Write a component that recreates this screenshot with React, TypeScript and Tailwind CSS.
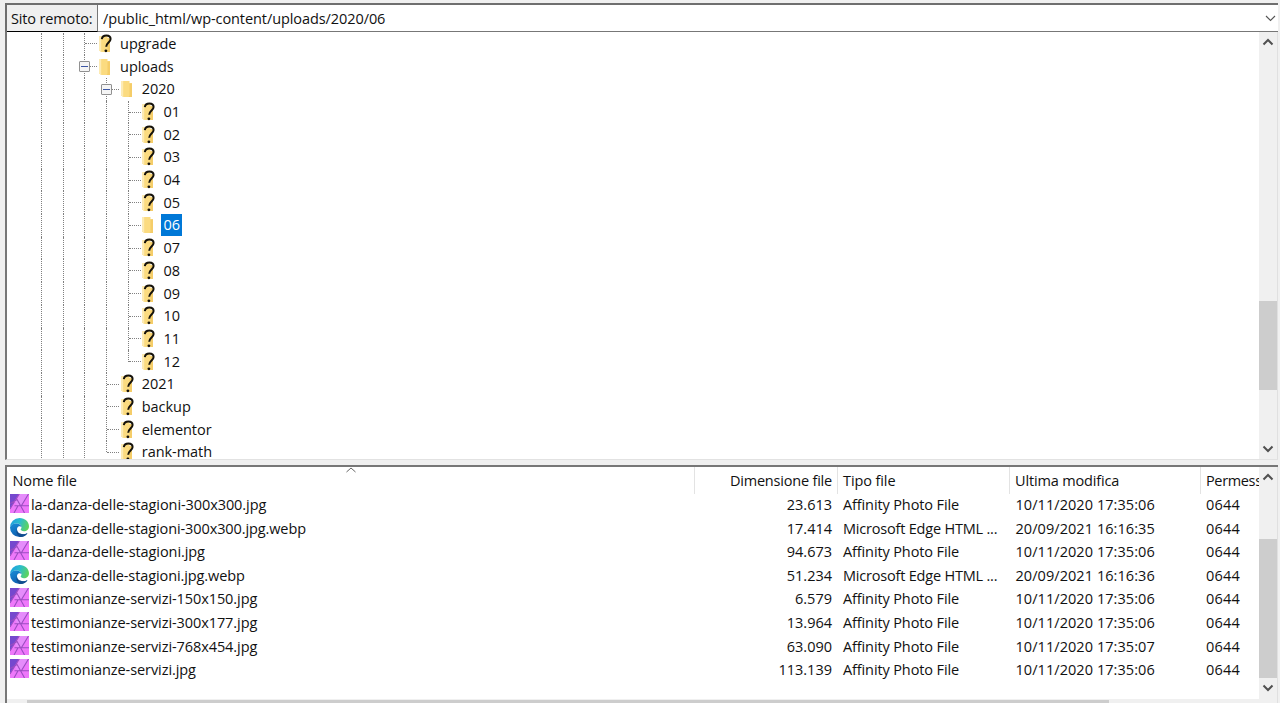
import clsx from 'clsx'

type Guide = 'line' | 'branch' | 'last' | 'box'

interface TreeRow {
  label: string
  guides: Guide[]
  open?: boolean
  selected?: boolean
}

const months = ['01', '02', '03', '04', '05', '06', '07', '08', '09', '10', '11', '12']

const tree: TreeRow[] = [
  { label: 'upgrade', guides: ['line', 'line', 'branch'] },
  { label: 'uploads', guides: ['line', 'line', 'box'], open: true },
  { label: '2020', guides: ['line', 'line', 'line', 'box'], open: true },
  ...months.map((label): TreeRow => ({
    label,
    guides: ['line', 'line', 'line', 'line', label === '12' ? 'last' : 'branch'],
    open: label === '06',
    selected: label === '06',
  })),
  { label: '2021', guides: ['line', 'line', 'line', 'branch'] },
  { label: 'backup', guides: ['line', 'line', 'line', 'branch'] },
  { label: 'elementor', guides: ['line', 'line', 'line', 'branch'] },
  { label: 'rank-math', guides: ['line', 'line', 'line', 'last'] },
]

const files = [
  { name: 'la-danza-delle-stagioni-300x300.jpg', size: '23.613', date: '10/11/2020 17:35:06' },
  { name: 'la-danza-delle-stagioni-300x300.jpg.webp', size: '17.414', date: '20/09/2021 16:16:35' },
  { name: 'la-danza-delle-stagioni.jpg', size: '94.673', date: '10/11/2020 17:35:06' },
  { name: 'la-danza-delle-stagioni.jpg.webp', size: '51.234', date: '20/09/2021 16:16:36' },
  { name: 'testimonianze-servizi-150x150.jpg', size: '6.579', date: '10/11/2020 17:35:06' },
  { name: 'testimonianze-servizi-300x177.jpg', size: '13.964', date: '10/11/2020 17:35:06' },
  { name: 'testimonianze-servizi-768x454.jpg', size: '63.090', date: '10/11/2020 17:35:07' },
  { name: 'testimonianze-servizi.jpg', size: '113.139', date: '10/11/2020 17:35:06' },
]

const columns = 'grid grid-cols-[688px_143px_172px_191px_58px]'

function FolderIcon({ open }: { open?: boolean }) {
  return (
    <svg width="14" height="20" viewBox="0 0 14 20" className="shrink-0">
      <path d="M1 2h8.5v2.2H12V18H3.5L1 16.5z" fill="#fbdb80" />
      <path d="M1 2h2.2v16L1 16.5z" fill="#fdebb4" />
      <path d="M9.5 4.2H12V18H8.5l1-1.5z" fill="#f5cd69" />
      {!open && (
        <>
          <path
            d="M3.8 5.2C4.2 2.6 6 1.600 8.400 1.600c2.600 0 4.200 1.400 4.200 3.500 0 3.300-4.400 3.800-4.400 7.700"
            fill="none"
            stroke="#15120b"
            strokeWidth="2"
          />
          <circle cx="7.9" cy="16.8" r="1.4" fill="#15120b" />
        </>
      )}
    </svg>
  )
}

function PhotoIcon() {
  return (
    <svg width="19" height="19" viewBox="0 0 19 19">
      <path d="M0 0h19v19H0z" fill="#ee78fa" />
      <path d="M9 0h10L12 11H7L5 7z" fill="#e58cfb" />
      <path d="M0 0h9L0 14.5z" fill="#7548ce" />
      <path
        d="M9.3 0 0 15M6.500 4.500 13.500 17M18.500 0l-7 11.500M0 9.500 6.500 6M4.500 11.800H19M8 11.800 4 19M13.500 17l1 2"
        fill="none"
        stroke="#9b4cc1"
        strokeWidth="1.1"
      />
    </svg>
  )
}

function EdgeIcon() {
  return (
    <svg width="19" height="19" viewBox="0 0 19 19">
      <defs>
        <linearGradient id="edge-top" x1="0" y1="0.2" x2="1" y2="0.5">
          <stop offset="0" stopColor="#1e9de0" />
          <stop offset="0.5" stopColor="#2bbdcb" />
          <stop offset="1" stopColor="#5ed45c" />
        </linearGradient>
        <linearGradient id="edge-body" x1="0" y1="0" x2="0.6" y2="1">
          <stop offset="0" stopColor="#1a8fd8" />
          <stop offset="1" stopColor="#0c59ab" />
        </linearGradient>
      </defs>
      <path
        d="M0 9.500A9.500 9.500 0 0 1 9.500 0C15.200 0 19 4 19 8.200c0 3.200-2.300 5-5 5-2.200 0-3.300-.8-3.300-1.600 0-.6.800-1 .8-2.300C11.500 7 9 5.600 6.500 5.600 3 5.600.6 7.500 0 9.500z"
        fill="url(#edge-top)"
      />
      <path
        d="M0 9.500C.5 7 3 5.400 6.200 5.400c3 0 5.300 1.700 5.300 3.900-.6-.9-1.500-1.300-2.500-1-1.400.4-2 1.600-2 3.200 0 2.800 2.800 4.700 5.800 4.700 2 0 3.500-.6 4.700-1.300C16.200 17.300 13.500 19 9.500 19A9.500 9.500 0 0 1 0 9.500z"
        fill="url(#edge-body)"
      />
      <path
        d="M7 11.500c0 2.800 2.800 4.700 5.800 4.700 2 0 3.500-.6 4.700-1.300C16 17.500 13.500 19 10.500 19 7.500 18 5.500 14.500 7 11.500z"
        fill="#124d8e"
      />
    </svg>
  )
}

function Arrow({ down, className }: { down?: boolean; className?: string }) {
  return (
    <svg width="12" height="8" viewBox="0 0 12 8" className={className}>
      <path
        d={down ? 'M1.5 1.5 6 6l4.500-4.500' : 'M1.500 6.500 6 2l4.500 4.500'}
        fill="none"
        stroke="currentColor"
        strokeWidth="2"
      />
    </svg>
  )
}

function GuideCell({ kind }: { kind: Guide }) {
  return (
    <div className="w-[21.7px] shrink-0 flex">
      <div
        className={clsx(
          'w-px shrink-0 border-l border-dotted border-[#808080]',
          kind === 'last' ? 'h-1/2' : 'h-full',
        )}
      />
      {kind !== 'line' && (
        <div className="self-center h-px w-[12px] shrink-0 border-t border-dotted border-[#808080]" />
      )}
      {kind === 'box' && (
        <div className="self-center -ml-[18px] z-10 flex items-center justify-center size-[11px] shrink-0 rounded-[1px] border border-[#919191] bg-[#f5f5f5]">
          <div className="w-[7px] h-px bg-[#3d57a5]" />
        </div>
      )}
    </div>
  )
}

function TreeItem({ row }: { row: TreeRow }) {
  return (
    <div className="flex h-[22.7px] pl-[34px] shrink-0">
      {row.guides.map((kind, i) => (
        <GuideCell key={i} kind={kind} />
      ))}
      <div className="flex items-center -ml-[8px]">
        <FolderIcon open={row.open} />
        <span
          className={clsx(
            'ml-[6px] px-[2px] h-[22px] leading-[22px] tracking-[-0.05px]',
            row.selected && 'bg-[#0078d7] text-white',
          )}
        >
          {row.label}
        </span>
      </div>
    </div>
  )
}

export default function App() {
  return (
    <div className="w-[1280px] h-[703px] overflow-hidden bg-[#f0f0f0] pl-[5px] pr-[2px] pt-[3px] flex flex-col text-[14.5px] text-[#111] whitespace-nowrap font-['Open_Sans','Noto_Sans',sans-serif]">
      <div className="h-[29px] shrink-0 flex border-t-2 border-l-2 border-[#6f6f6f]">
        <div className="w-[91px] h-[27px] pl-[4px] leading-[27px] border-r border-b border-r-[#777] border-b-black tracking-[-0.15px]">
          Sito remoto:
        </div>
        <div className="flex-1 bg-white border-b border-[#777] pl-[5px] leading-[27px] tracking-[-0.08px] flex justify-between">
          <span>/public_html/wp-content/uploads/2020/06</span>
          <svg width="11" height="7" viewBox="0 0 11 7" className="mt-[10px] mr-[2px]">
            <path d="m1 1 4.500 4.500L10 1" fill="none" stroke="#555" strokeWidth="1.1" />
          </svg>
        </div>
      </div>

      <div className="h-[428px] shrink-0 flex border-l-2 border-b border-l-[#777] border-b-[#e2e2e2] bg-white">
        <div className="flex-1 overflow-hidden flex flex-col pt-[0.6px]">
          {tree.map((row) => (
            <TreeItem key={row.label} row={row} />
          ))}
        </div>
        <div className="w-[19px] bg-[#f0f0f0] border-r border-[#e0e0e0] flex flex-col items-center text-[#505050]">
          <Arrow className="mt-[6px]" />
          <div className="mt-[255px] w-full h-[89px] bg-[#cdcdcd]" />
          <Arrow down className="mt-auto mb-[6px]" />
        </div>
      </div>

      <div className="mt-[5px] h-[238px] shrink-0 flex border-t-2 border-l-2 border-[#777] bg-white">
        <div className="flex-1 overflow-hidden flex flex-col">
          <div className={clsx(columns, 'relative h-[26px] leading-[27px]')}>
            <div className="pl-[5.5px] border-r border-[#e3e3e3] tracking-[-0.1px]">Nome file</div>
            <div className="pr-[5px] text-right border-r border-[#e3e3e3] tracking-[-0.2px]">Dimensione file</div>
            <div className="pl-[5px] border-r border-[#e3e3e3] tracking-[-0.1px]">Tipo file</div>
            <div className="pl-[5px] border-r border-[#e3e3e3] tracking-[-0.15px]">Ultima modifica</div>
            <div className="pl-[5px] tracking-[-0.35px]">Permess</div>
            <svg width="10" height="6" viewBox="0 0 10 6" className="absolute left-[339px] top-0">
              <path d="m.5 5 4.500-4 4.500 4" fill="none" stroke="#666" />
            </svg>
          </div>
          {files.map((file) => {
            const webp = file.name.endsWith('.webp')
            return (
              <div key={file.name} className={clsx(columns, 'h-[23.6px] leading-[24px] shrink-0')}>
                <div className="flex items-center pl-[3px]">
                  <div className="-mt-[3px]">{webp ? <EdgeIcon /> : <PhotoIcon />}</div>
                  <span className={clsx('ml-[2px]', webp ? 'tracking-[-0.1px]' : 'tracking-[-0.08px]')}>
                    {file.name}
                  </span>
                </div>
                <div className="text-right pr-[6px]">{file.size}</div>
                <div className={clsx('pl-[5px]', webp ? 'tracking-[-0.2px]' : 'tracking-[-0.12px]')}>
                  {webp ? 'Microsoft Edge HTML ...' : 'Affinity Photo File'}
                </div>
                <div className="pl-[5.5px] tracking-[0.06px]">{file.date}</div>
                <div className="pl-[5px] tracking-[0.2px]">0644</div>
              </div>
            )
          })}
          <div className="mt-auto h-[4px] bg-[#f0f0f0] pt-px shrink-0">
            <div className="ml-[20px] w-[1082px] h-[3px] bg-[#cdcdcd]" />
          </div>
        </div>
        <div className="w-[19px] bg-[#f0f0f0] border-r border-[#e0e0e0] flex flex-col items-center text-[#505050]">
          <Arrow className="mt-[6px]" />
          <div className="mt-[58px] w-full h-[139px] bg-[#cdcdcd]" />
          <Arrow down className="mt-[6px]" />
        </div>
      </div>
    </div>
  )
}
